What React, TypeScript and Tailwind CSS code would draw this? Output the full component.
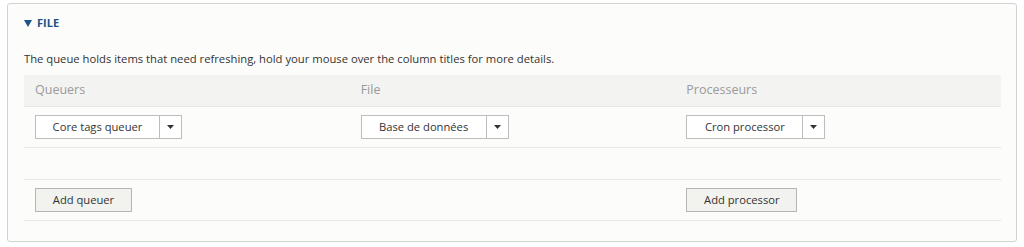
const Select = ({ label, width }: { label: string; width: string }) => {
  return (
    <div className="flex h-[24px] w-fit border border-[#bdbdbd] bg-white">
      <div className={`${width} flex items-center justify-center text-[11.2px] text-[#333]`}>{label}</div>
      <div className="flex w-[22px] items-center justify-center border-l border-[#bdbdbd]">
        <svg width="7" height="4" viewBox="0 0 7 4">
          <path d="M0 0h7L3.5 4z" fill="#333" />
        </svg>
      </div>
    </div>
  )
}

const Button = ({ label, width }: { label: string; width: string }) => {
  return (
    <div className={`${width} flex h-[24px] items-center justify-center border border-[#b5b5b5] bg-[#f2f2ee] text-[11.2px] text-[#333]`}>
      {label}
    </div>
  )
}

export default function App() {
  const cell = "px-[11px]"
  return (
    <div className="min-h-[247px] bg-white pt-[3px] pl-[7px]" style={{ fontFamily: '"Open Sans", sans-serif' }}>
      <div className="h-[239px] w-[1010px] rounded-[3px] border border-[#d2d2d0] bg-[#fcfcfa] px-[16px]">
        <div className="flex h-[37px] items-center gap-[5px] pt-[1px] text-[11px] font-bold text-[#1b5486]">
          <svg width="8" height="7" viewBox="0 0 8 7">
            <path d="M0 0h8L4 7z" fill="#1b5486" />
          </svg>
          <span>FILE</span>
        </div>
        <p className="mt-[10px] text-[11.25px] leading-[16px] text-[#333]">
          The queue holds items that need refreshing, hold your mouse over the column titles for more details.
        </p>
        <div className="mt-[8px] w-[977px]">
          <div className="grid h-[32px] grid-cols-3 items-center border-b border-[#e6e6e4] bg-[#f3f3f1] text-[12.5px] text-[#9a9a9a]">
            <div className={cell}>Queuers</div>
            <div className={cell}>File</div>
            <div className={cell}>Processeurs</div>
          </div>
          <div className="grid h-[41px] grid-cols-3 items-center border-b border-[#e6e6e4]">
            <div className={cell}><Select label="Core tags queuer" width="w-[123px]" /></div>
            <div className={cell}><Select label="Base de données" width="w-[124px]" /></div>
            <div className={cell}><Select label="Cron processor" width="w-[115px]" /></div>
          </div>
          <div className="h-[32px] border-b border-[#e6e6e4]"></div>
          <div className="grid h-[41px] grid-cols-3 items-center border-b border-[#e6e6e4]">
            <div className={cell}><Button label="Add queuer" width="w-[97px]" /></div>
            <div className={cell}></div>
            <div className={cell}><Button label="Add processor" width="w-[111px]" /></div>
          </div>
        </div>
      </div>
    </div>
  )
}
